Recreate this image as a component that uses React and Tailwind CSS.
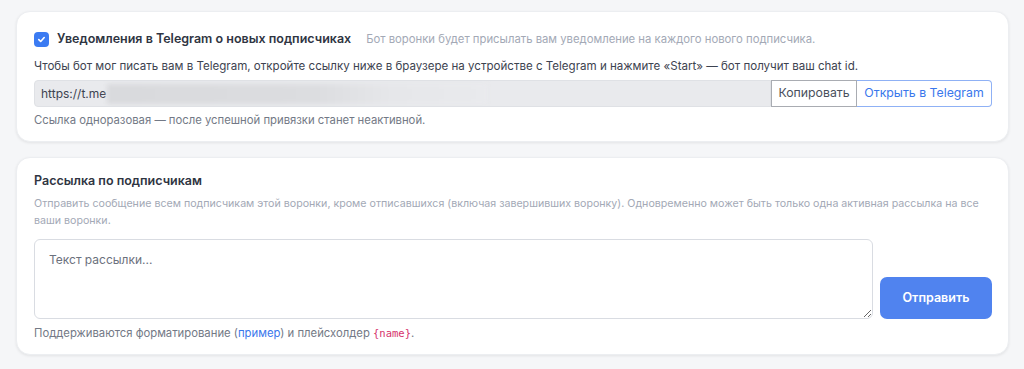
import React from "react";

export default function App() {
  return (
    <div
      className="min-h-[369px] w-full bg-[#f5f6f8] pl-4 pr-[15px] pt-[11px] pb-4 flex flex-col gap-[15px]"
      style={{ fontFamily: "Inter, 'Noto Sans', sans-serif" }}
    >
      {/* Card 1 */}
      <div className="bg-white rounded-[14px] border border-[#eceef1] shadow-[0_1px_3px_rgba(0,0,0,0.08)] pl-[17px] pr-4 pt-[17px] pb-[13px]">
        <div className="flex items-center h-[20px]">
          <span className="w-[15px] h-[15px] rounded-[4px] bg-[#3b7bf2] flex items-center justify-center mr-[8px]">
            <svg width="9" height="9" viewBox="0 0 10 10" fill="none">
              <path d="M2 5.2 L4.1 7.2 L8 2.8" stroke="white" strokeWidth="1.8" strokeLinecap="round" strokeLinejoin="round" />
            </svg>
          </span>
          <span className="text-[12.5px] font-semibold text-[#2f3542]">
            Уведомления в Telegram о новых подписчиках
          </span>
          <span className="ml-[15px] text-[11.3px] text-[#a3a9b6]">
            Бот воронки будет присылать вам уведомление на каждого нового подписчика.
          </span>
        </div>
        <div className="mt-[7px] text-[11.55px] text-[#3d4350] leading-[20px] whitespace-nowrap">
          Чтобы бот мог писать вам в Telegram, откройте ссылку ниже в браузере на устройстве с Telegram и нажмите «Start» — бот получит ваш chat id.
        </div>
        <div className="mt-[4px] flex h-[27px]">
          <div className="flex-1 flex items-center bg-[#e9eaed] border border-[#dfe1e5] rounded-l-[4px] pl-[6px] overflow-hidden">
            <span className="text-[12px] text-[#3d4350]">https://t.me</span>
            <span className="inline-block w-[380px] h-[20px] ml-[1px] bg-[linear-gradient(90deg,#d9dadd_0%,#dcdde0_55%,#e6e7ea_75%,#e9eaed_100%)] blur-[2px]" />
          </div>
          <button className="h-full w-[86px] border border-[#a9acb2] bg-white text-[12.3px] text-[#4a505c]">
            Копировать
          </button>
          <button className="h-full w-[135px] border border-l-0 border-[#8fb1f5] rounded-r-[4px] bg-white text-[12.3px] text-[#3a77ec]">
            Открыть в Telegram
          </button>
        </div>
        <div className="mt-[5px] text-[11.3px] text-[#737986] leading-[16px]">
          Ссылка одноразовая — после успешной привязки станет неактивной.
        </div>
      </div>

      {/* Card 2 */}
      <div className="bg-white rounded-[14px] border border-[#eceef1] shadow-[0_1px_3px_rgba(0,0,0,0.08)] pl-[17px] pr-4 pt-[13px] pb-[13px]">
        <div className="text-[12.5px] font-semibold text-[#2f3542] leading-[20px]">
          Рассылка по подписчикам
        </div>
        <div className="mt-[4px] text-[10.65px] text-[#a3a9b6] leading-[17px]">
          Отправить сообщение всем подписчикам этой воронки, кроме отписавшихся (включая завершивших воронку). Одновременно может быть только одна активная рассылка на все ваши воронки.
        </div>
        <div className="mt-[10px] flex items-end gap-[7px]">
          <textarea
            placeholder="Текст рассылки..."
            className="flex-1 h-[80px] rounded-[6px] border border-[#d9dce2] px-[14px] py-[11px] text-[12px] text-[#3d4350] placeholder:text-[#6b717d] resize-y outline-none"
          />
          <button className="w-[112px] h-[42px] rounded-[7px] bg-[#5083ef] text-white text-[12.5px] font-semibold">
            Отправить
          </button>
        </div>
        <div className="mt-[6px] text-[11.3px] text-[#737986] leading-[16px]">
          Поддерживаются форматирование (<span className="text-[#3a77ec]">пример</span>) и плейсхолдер{" "}
          <span className="text-[#d6336c] text-[10.5px]" style={{ fontFamily: "'DejaVu Sans Mono', monospace" }}>{"{name}"}</span>.
        </div>
      </div>
    </div>
  );
}
